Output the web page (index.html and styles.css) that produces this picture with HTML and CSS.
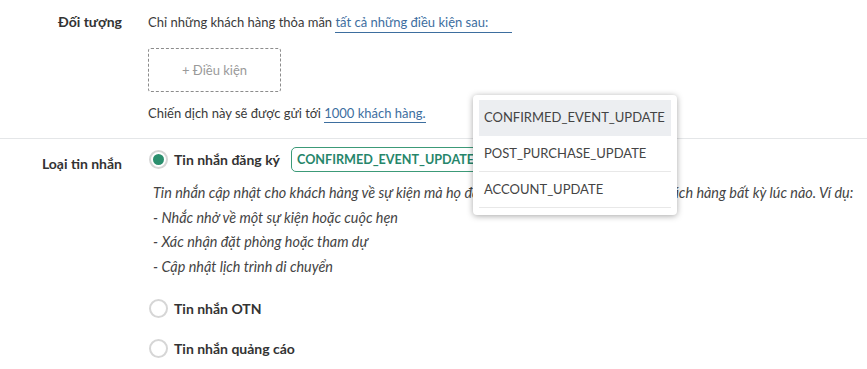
FILE: index.html
```html
<!DOCTYPE html>
<html lang="vi">
<head>
<meta charset="UTF-8">
<meta name="viewport" content="width=device-width, initial-scale=1.0">
<title>Chiến dịch</title>
<link rel="stylesheet" href="styles.css">
</head>
<body>

<div class="form">

  <div class="row audience">
    <div class="label">Đối tượng</div>
    <div class="field">
      <div class="line">Chỉ những khách hàng thỏa mãn <span class="select-link">tất cả những điều kiện sau:</span></div>
      <div class="add-box">+ Điều kiện</div>
      <div class="line">Chiến dịch này sẽ được gửi tới <span class="link">1000 khách hàng.</span></div>
    </div>
  </div>

  <div class="row type">
    <div class="label">Loại tin nhắn</div>
    <div class="field">
      <div class="option">
        <span class="radio checked"></span>
        <span class="opt-name">Tin nhắn đăng ký</span>
        <span class="tag">CONFIRMED_EVENT_UPDATE</span>
      </div>
      <div class="desc">
        <div>Tin nhắn cập nhật cho khách hàng về sự kiện mà họ đã đăng ký, có thể được gửi cho khách hàng bất kỳ lúc nào. Ví dụ:</div>
        <div>- Nhắc nhở về một sự kiện hoặc cuộc hẹn</div>
        <div>- Xác nhận đặt phòng hoặc tham dự</div>
        <div>- Cập nhật lịch trình di chuyển</div>
      </div>
      <div class="option">
        <span class="radio"></span>
        <span class="opt-name">Tin nhắn OTN</span>
      </div>
      <div class="option">
        <span class="radio"></span>
        <span class="opt-name">Tin nhắn quảng cáo</span>
      </div>
    </div>
  </div>

</div>

<div class="menu">
  <div class="menu-item active">CONFIRMED_EVENT_UPDATE</div>
  <div class="menu-item">POST_PURCHASE_UPDATE</div>
  <div class="menu-item">ACCOUNT_UPDATE</div>
</div>

</body>
</html>
```

FILE: styles.css
```css
body {
  margin: 0;
  font-family: Lato, "Noto Sans", sans-serif;
  font-size: 13px;
  color: #3a3a3a;
  background: white;
  overflow: hidden;
}

.row {
  display: grid;
  grid-template-columns: 122px 1fr;
  column-gap: 26px;
}

.label {
  text-align: right;
  font-weight: bold;
  font-size: 14px;
  color: #333;
  line-height: 20px;
}

.audience {
  padding-top: 12px;
  padding-bottom: 15px;
  border-bottom: 1px solid #e4e6e8;
}

.line {
  line-height: 20px;
}

.select-link {
  display: inline-block;
  color: #3d6e9f;
  border-bottom: 1px solid #3d6e9f;
  line-height: 20px;
  padding-right: 24px;
}

.link {
  color: #3d6e9f;
  border-bottom: 1px solid #3d6e9f;
  padding-bottom: 1px;
}

.add-box {
  width: 131px;
  height: 42px;
  margin: 15px 0 11px;
  border: 1px dashed #8c8c8c;
  border-radius: 3px;
  color: #9a9a9a;
  display: flex;
  align-items: center;
  justify-content: center;
}

.type {
  padding-top: 7px;
}

.type .label {
  padding-top: 8px;
}

.option {
  display: flex;
  align-items: center;
  gap: 6px;
  height: 26px;
}

.radio {
  width: 15px;
  height: 15px;
  border: 2px solid #d6d6d6;
  border-radius: 50%;
  margin-left: 1px;
  display: flex;
  align-items: center;
  justify-content: center;
}

.radio.checked::after {
  content: "";
  width: 11px;
  height: 11px;
  border-radius: 50%;
  background: #2b8f6e;
}

.opt-name {
  font-weight: bold;
  font-size: 14px;
  color: #333;
}

.tag {
  margin-left: 5px;
  border: 1px solid #3c9a78;
  border-radius: 5px;
  padding: 0 8px 0 5px;
  height: 23px;
  line-height: 23px;
  color: #26866a;
  font-weight: bold;
  font-size: 12.6px;
}

.desc {
  font-style: italic;
  font-size: 14.4px;
  color: #444;
  line-height: 24.7px;
  padding: 9px 0 16px 5px;
}

.option + .option {
  margin-top: 14px;
}

.menu {
  position: absolute;
  left: 473px;
  top: 95px;
  width: 192px;
  padding: 5px 6px 7px;
  background: white;
  border-radius: 4px;
  box-shadow: 0 1px 6px rgba(0,0,0,0.35);
}

.menu-item {
  height: 35px;
  line-height: 35px;
  padding-left: 5px;
  border-bottom: 1px solid #e8e8e8;
  color: #444;
}

.menu-item.active {
  background: #eceef1;
  border-bottom-color: transparent;
}
```
